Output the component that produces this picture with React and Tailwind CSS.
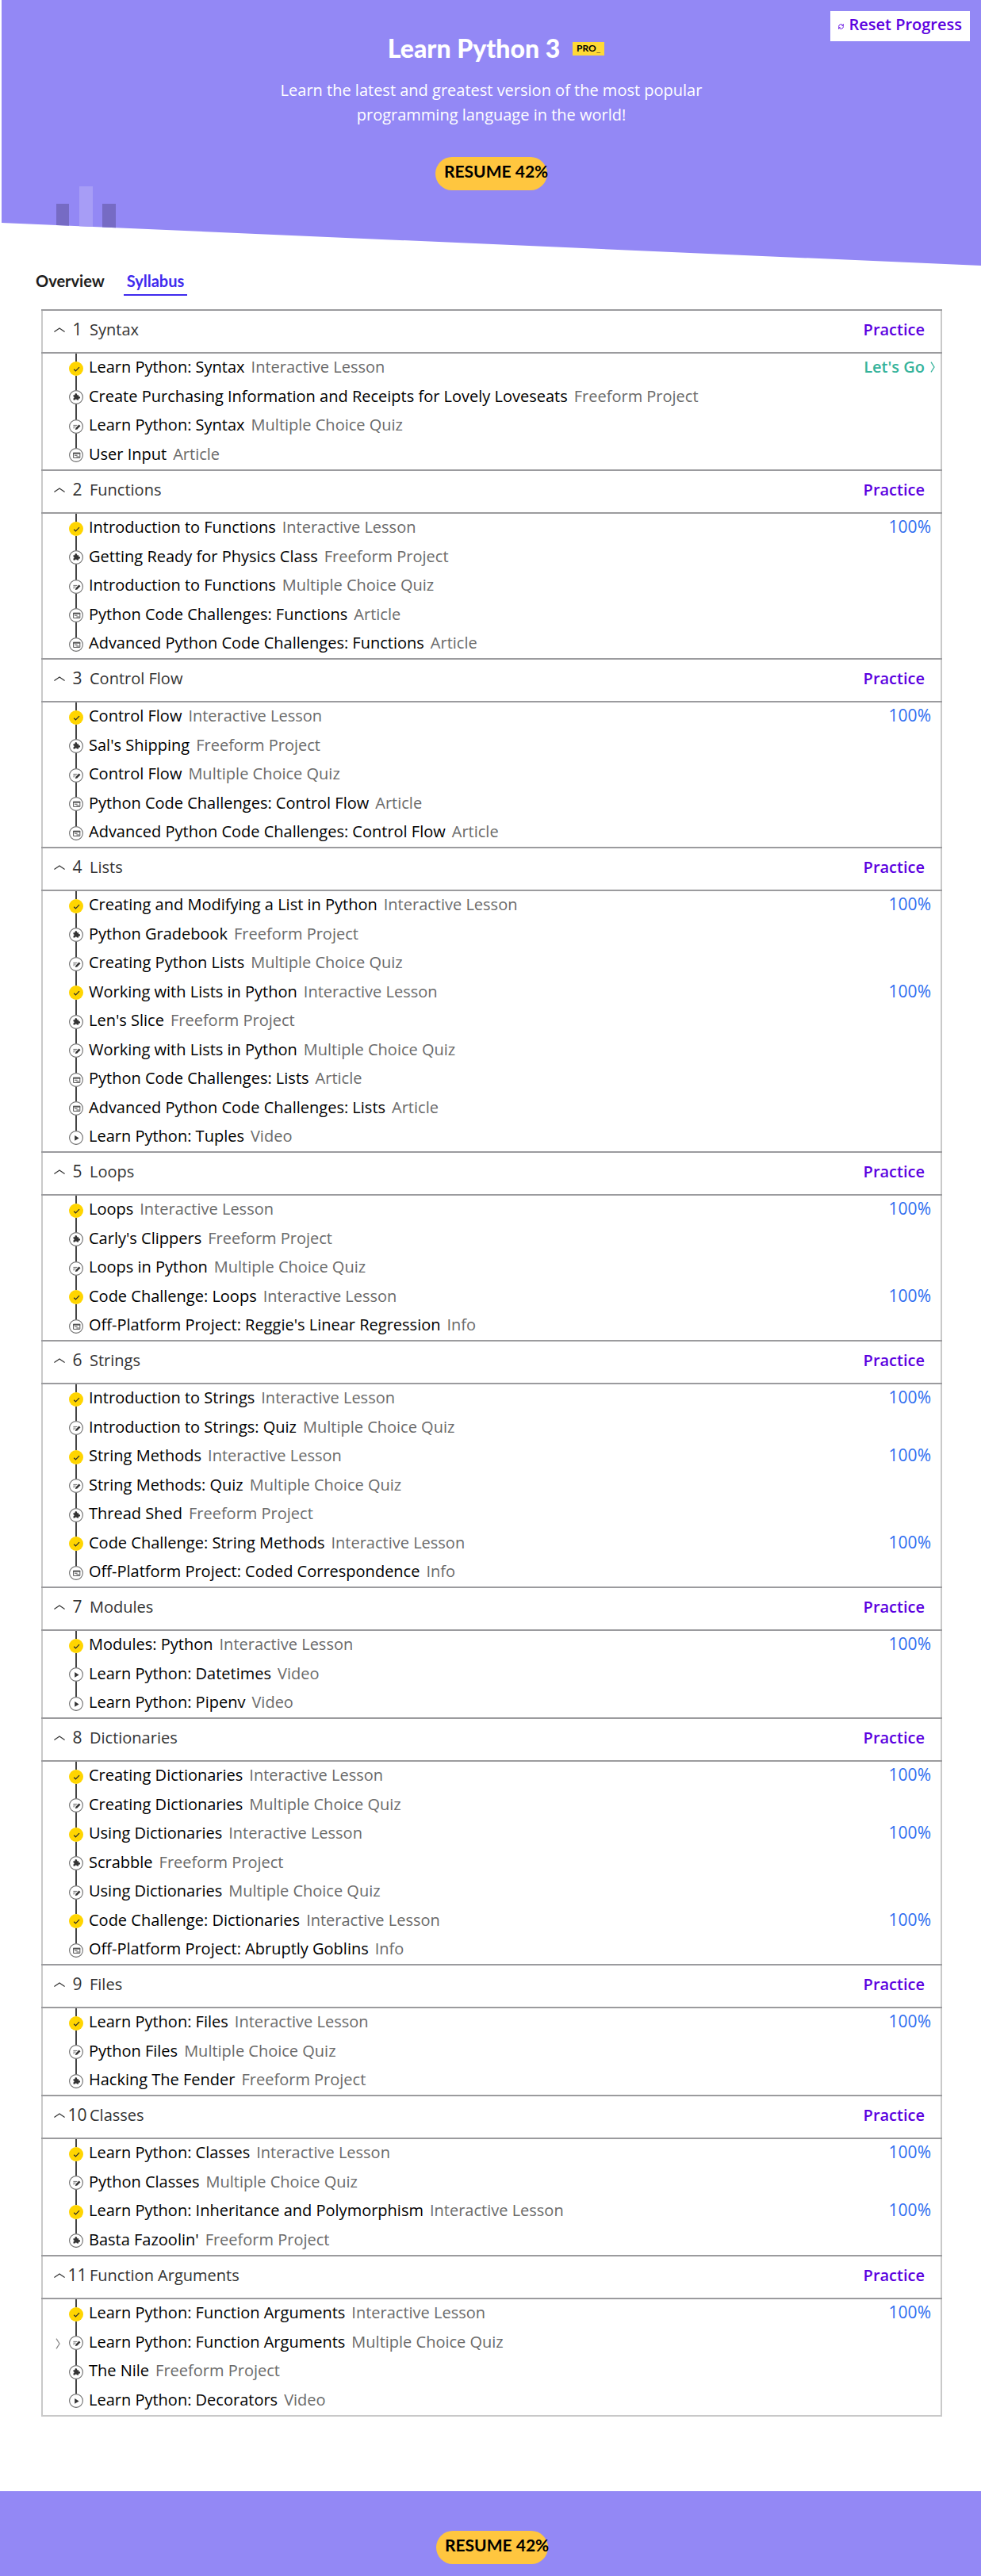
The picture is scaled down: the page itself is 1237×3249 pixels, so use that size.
import React, { useState } from "react";

const UNITS = [
  ["Syntax", [
    ["Learn Python: Syntax", "lesson", "go"],
    ["Create Purchasing Information and Receipts for Lovely Loveseats", "project"],
    ["Learn Python: Syntax", "quiz"],
    ["User Input", "article"],
  ]],
  ["Functions", [
    ["Introduction to Functions", "lesson"],
    ["Getting Ready for Physics Class", "project"],
    ["Introduction to Functions", "quiz"],
    ["Python Code Challenges: Functions", "article"],
    ["Advanced Python Code Challenges: Functions", "article"],
  ]],
  ["Control Flow", [
    ["Control Flow", "lesson"],
    ["Sal's Shipping", "project"],
    ["Control Flow", "quiz"],
    ["Python Code Challenges: Control Flow", "article"],
    ["Advanced Python Code Challenges: Control Flow", "article"],
  ]],
  ["Lists", [
    ["Creating and Modifying a List in Python", "lesson"],
    ["Python Gradebook", "project"],
    ["Creating Python Lists", "quiz"],
    ["Working with Lists in Python", "lesson"],
    ["Len's Slice", "project"],
    ["Working with Lists in Python", "quiz"],
    ["Python Code Challenges: Lists", "article"],
    ["Advanced Python Code Challenges: Lists", "article"],
    ["Learn Python: Tuples", "video"],
  ]],
  ["Loops", [
    ["Loops", "lesson"],
    ["Carly's Clippers", "project"],
    ["Loops in Python", "quiz"],
    ["Code Challenge: Loops", "lesson"],
    ["Off-Platform Project: Reggie's Linear Regression", "info"],
  ]],
  ["Strings", [
    ["Introduction to Strings", "lesson"],
    ["Introduction to Strings: Quiz", "quiz"],
    ["String Methods", "lesson"],
    ["String Methods: Quiz", "quiz"],
    ["Thread Shed", "project"],
    ["Code Challenge: String Methods", "lesson"],
    ["Off-Platform Project: Coded Correspondence", "info"],
  ]],
  ["Modules", [
    ["Modules: Python", "lesson"],
    ["Learn Python: Datetimes", "video"],
    ["Learn Python: Pipenv", "video"],
  ]],
  ["Dictionaries", [
    ["Creating Dictionaries", "lesson"],
    ["Creating Dictionaries", "quiz"],
    ["Using Dictionaries", "lesson"],
    ["Scrabble", "project"],
    ["Using Dictionaries", "quiz"],
    ["Code Challenge: Dictionaries", "lesson"],
    ["Off-Platform Project: Abruptly Goblins", "info"],
  ]],
  ["Files", [
    ["Learn Python: Files", "lesson"],
    ["Python Files", "quiz"],
    ["Hacking The Fender", "project"],
  ]],
  ["Classes", [
    ["Learn Python: Classes", "lesson"],
    ["Python Classes", "quiz"],
    ["Learn Python: Inheritance and Polymorphism", "lesson"],
    ["Basta Fazoolin'", "project"],
  ]],
  ["Function Arguments", [
    ["Learn Python: Function Arguments", "lesson"],
    ["Learn Python: Function Arguments", "quiz", "current"],
    ["The Nile", "project"],
    ["Learn Python: Decorators", "video"],
  ]],
];

const KINDS = {
  lesson: "Interactive Lesson",
  project: "Freeform Project",
  quiz: "Multiple Choice Quiz",
  article: "Article",
  info: "Info",
  video: "Video",
};

function Glyph({ kind }) {
  if (kind === "lesson") {
    return (
      <svg viewBox="0 0 18 18" className="size-[18px]" aria-hidden="true">
        <circle cx="9" cy="9" r="9" fill="#ffd500" />
        <path d="M6.2 9.8l2.2 2L13 7.2" fill="none" stroke="#2b2b2b" strokeWidth="1.2" />
      </svg>
    );
  }
  return (
    <svg viewBox="0 0 18 18" className="size-[18px]" aria-hidden="true">
      <circle cx="9" cy="9" r="8.4" fill="#fff" stroke="#6e6e6e" strokeWidth="1.1" />
      {kind === "project" && (
        <path
          fill="#333"
          d="M5.500 6.300h2.200a1.400 1.400 0 1 1 2.200 0h2.200v1.900a1.300 1.300 0 1 1 0 2.200v2.200h-2.200a1.100 1.100 0 1 0-2.200 0H5.500v-2.200a1.100 1.100 0 1 0 0-2.200z"
        />
      )}
      {kind === "quiz" && (
        <>
          <path d="M5.4 7.4h5M5.4 9.1h3.2M5.4 10.8h1.6" stroke="#777" strokeWidth="1" />
          <path d="M12.6 6.6l1.9 1.6-4.2 4.2-2.5.7.7-2.4z" fill="#333" />
        </>
      )}
      {(kind === "article" || kind === "info") && (
        <>
          <path d="M5.6 6.3h8.2v6.1H5.6z" fill="#fff" stroke="#555" strokeWidth="1" />
          <path d="M5.2 5.8h9v1.9h-9z" fill="#555" />
          <path d="M7 9.2h3.6M9.4 11h3.4" stroke="#555" strokeWidth="1.1" />
        </>
      )}
      {kind === "video" && <path d="M7.2 6l5.4 3.4-5.4 3.4z" fill="#333" />}
    </svg>
  );
}

function RightChevron({ className }) {
  return (
    <svg viewBox="0 0 6 14" className={className} aria-hidden="true">
      <path d="M1 .6l4 6.4-4 6.4" fill="none" stroke="currentColor" strokeWidth="1.3" />
    </svg>
  );
}

function Lesson({ title, kind, mark, last }) {
  return (
    <li className="flex h-[36px] items-stretch even:h-[37px]">
      <span className="flex w-[33px] shrink-0 items-center justify-center pt-0.5 pl-[5px]">
        {mark === "current" && <RightChevron className="h-[14px] w-[6px] text-[#8c8c8c]" />}
      </span>
      <span className="flex w-[18px] shrink-0 flex-col items-center">
        <span className="h-[10px] w-[2px] bg-[#454545]" />
        <Glyph kind={kind} />
        <span className={last ? "hidden" : "w-[2px] flex-1 bg-[#454545]"} />
      </span>
      <a href="#lesson" className="flex grow items-center gap-2 pb-0.5 pl-[7px] text-black">
        <span>{title}</span>
        <span className="text-[#6a6a6a]">{KINDS[kind]}</span>
      </a>
      {kind === "lesson" && mark !== "go" && (
        <span className="flex items-center pr-[12px] pb-0.5 text-[21px] text-[#2f6df0]">100%</span>
      )}
      {mark === "go" && (
        <a href="#go" className="flex items-center gap-[7px] pr-[7px] pb-0.5 font-semibold text-[#35b39b]">
          Let's Go
          <RightChevron className="h-[14px] w-[6px]" />
        </a>
      )}
    </li>
  );
}

function Unit({ index, name, lessons }) {
  const [open, setOpen] = useState(true);
  return (
    <section>
      <div className="-mx-[2px] flex h-[56px] items-stretch justify-between border-y-2 border-[#9b9b9e]">
        <h2 className="flex">
          <button
            type="button"
            aria-expanded={open}
            onClick={() => setOpen(!open)}
            className="flex items-center pb-1 pl-[16px] text-[#333]"
          >
            <svg viewBox="0 0 14 6" className="h-[6px] w-[14px]" aria-hidden="true">
              <path d="M.4 5.4L7 1l6.600 4.400" fill="none" stroke="#333" strokeWidth="1.2" />
            </svg>
            <span className="w-[31px] text-center text-[21px]">{index}</span>
            <span>{name}</span>
          </button>
        </h2>
        <button type="button" className="pr-[22px] pb-1 pl-4 font-semibold text-[#5b00e0]">
          Practice
        </button>
      </div>
      {open && (
        <ul>
          {lessons.map(([title, kind, mark], i) => (
            <Lesson key={i} title={title} kind={kind} mark={mark} last={i === lessons.length - 1} />
          ))}
        </ul>
      )}
    </section>
  );
}

function ResumeButton() {
  return (
    <button
      type="button"
      className="h-[42px] w-[141px] rounded-full bg-[#ffc63f] pb-1.5 pl-[11px] text-left font-[Lato,sans-serif] text-[21px] font-bold whitespace-nowrap text-black"
    >
      RESUME 42%
    </button>
  );
}

export default function App() {
  return (
    <div className="bg-white font-['Open_Sans',sans-serif] text-[20px] text-black">
      <header className="relative ml-[2px] flex flex-col items-center bg-[#9388f5] pt-[43px] pb-[95px] [clip-path:polygon(0_0,100%_0,100%_100%,0_281px)]">
        <svg viewBox="0 0 76 60" className="absolute top-[235px] left-[69px] h-[60px] w-[76px]" aria-hidden="true">
          <path d="M0 22h16v38H0zM58 22h17v38H58z" fill="#766bc4" />
          <path d="M29 0h17v60H29z" fill="#a79df6" />
        </svg>
        <button
          type="button"
          className="absolute top-[14px] right-[14px] flex h-[38px] items-center gap-1.5 bg-white pr-[10px] pb-1 pl-[10px] font-semibold text-[#5b00e0]"
        >
          <svg viewBox="0 0 24 24" className="mt-1 size-[7px]" fill="none" stroke="currentColor" strokeWidth="3" aria-hidden="true">
            <path d="M2 13a10 10 0 0 1 17-8l3 3M22 1v7h-7M22 11a10 10 0 0 1-17 8l-3-3M2 23v-7h7" />
          </svg>
          Reset Progress
        </button>
        <div className="flex items-center gap-[16px] pl-3">
          <h1 className="font-[Lato,sans-serif] text-[32px] leading-[36px] font-black text-white">Learn Python 3</h1>
          <span className="flex h-[17px] w-[40px] items-center justify-center bg-[#ffd935] font-[Lato,sans-serif] text-[12px] font-bold text-black">
            PRO<span className="text-[#8a7a2a]">_</span>
          </span>
        </div>
        <p className="mt-[19px] max-w-[540px] text-center leading-[31px] text-white">
          Learn the latest and greatest version of the most popular programming language in the world!
        </p>
        <div className="mt-[38px] flex">
          <ResumeButton />
        </div>
      </header>

      <nav className="mt-[7px] flex gap-5 pl-[41px] font-[Lato,sans-serif] leading-[24px] font-bold">
        <a href="#overview" className="border-b-2 border-transparent px-1 pb-[5px] text-[#1d1d1d]">Overview</a>
        <a href="#syllabus" aria-current="page" className="border-b-2 border-[#3f2aee] px-1 pb-[5px] text-[#3f2aee]">Syllabus</a>
      </nav>

      <main className="mt-[17px] mr-[49px] ml-[52px] border-x-2 border-b-2 border-[#c9c9c9]">
        {UNITS.map(([name, lessons], i) => (
          <Unit key={name} index={i + 1} name={name} lessons={lessons} />
        ))}
      </main>

      <footer className="mt-[94px] flex h-[107px] justify-center bg-[#9388f5] pt-[50px] pl-1">
        <ResumeButton />
      </footer>
    </div>
  );
}
